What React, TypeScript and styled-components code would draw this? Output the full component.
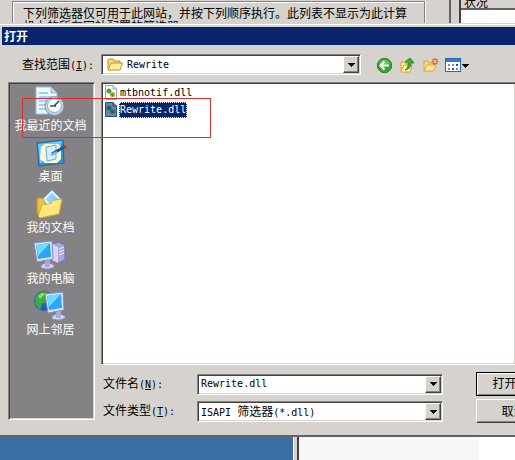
import React, { useState } from 'react';
import styled, { createGlobalStyle, css } from 'styled-components';

const face = '#d6d3ce';
const cjk = '"Noto Sans CJK SC", sans-serif';
const mono = '"DejaVu Sans Mono", "Noto Sans CJK SC", monospace';

const GlobalStyle = createGlobalStyle`
  * { box-sizing: border-box; }
  html, body, #root { height: 100%; }
  body { margin: 0; overflow: hidden; background: #3a6ea5; color: #000; font: 12px/14px ${cjk}; }
  button, input, select { font: inherit; color: inherit; border-radius: 0; margin: 0; }
`;

const sunken = css`
  border: 1px solid;
  border-color: #848284 #fff #fff #848284;
  box-shadow: inset 1px 1px 0 #424142, inset -1px -1px 0 ${face};
`;

const raised = css`
  border: 1px solid;
  border-color: #fff #424142 #424142 #fff;
  box-shadow: inset -1px -1px 0 #848284;
  background: ${face};
`;

const Screen = styled.div`
  display: grid;
  grid-template-rows: 23px auto 1fr;
  height: 100%;
  overflow: hidden;
`;

const Properties = styled.div`
  display: grid;
  grid-template-columns: minmax(0, 413px) 1fr;
  column-gap: 24px;
  padding-left: 12px;
  background: ${face};
  overflow: hidden;
`;

const GroupBox = styled.div`
  margin-top: 1px;
  padding: 4px 10px 0;
  border: 1px solid #848284;
  border-bottom: 0;
  box-shadow: inset 1px 1px 0 #fff, 1px 0 0 #fff;
  white-space: nowrap;
`;

const Note = styled.p`
  margin: 0;
  line-height: 13px;
`;

const StatusPane = styled.div`
  border-left: 2px solid #636163;
  padding-left: 8px;
`;

const StatusList = styled.div`
  height: 100%;
  border-left: 2px solid #424142;
  background: #fff;
`;

const StatusHeader = styled.div`
  height: 10px;
  padding-left: 3px;
  background: ${face};
  border-bottom: 2px solid #636163;
  line-height: 3px;
`;

const Dialog = styled.section`
  background: ${face};
  border-top: 1px solid ${face};
  border-bottom: 2px solid #636163;
  box-shadow: inset 0 1px 0 #fff;
  padding-bottom: 12px;
`;

const TitleBar = styled.h1`
  margin: 3px 0 0 2px;
  padding-left: 2px;
  height: 18px;
  background: #08246b;
  color: #fff;
  font-size: 12px;
  line-height: 17px;
  font-weight: 700;
`;

const LookBar = styled.div`
  display: grid;
  grid-template-columns: 79px 260px 1fr;
  align-items: center;
  padding: 9px 0 7px 22px;
`;

const Mono = styled.span`
  font-family: ${mono};
  font-size: 10px;
`;

const FieldLabel = styled.label`
  white-space: nowrap;
`;

const Combo = styled.div`
  ${sunken}
  display: grid;
  grid-template-columns: auto minmax(0, 1fr) 16px;
  align-items: center;
  height: 21px;
  padding: 1px;
  background: #fff;
`;

const FolderSlot = styled.span`
  display: flex;
  padding: 0 2px 0 4px;
`;

const comboText = css`
  width: 100%;
  height: 16px;
  border: 0;
  outline: 0;
  padding: 0 2px;
  background: transparent;
  appearance: none;
  font-family: ${mono};
  font-size: 10px;
  line-height: 16px;
`;

const ComboInput = styled.input`${comboText}`;
const ComboSelect = styled.select<{ $masked?: boolean }>`
  ${comboText}
  grid-area: 1 / 1;
  color: ${p => (p.$masked ? 'transparent' : '#000')};
`;

const Choice = styled.div`
  display: grid;
  grid-column: 2;
`;

const ChoiceText = styled.span`
  grid-area: 1 / 1;
  padding-left: 2px;
  line-height: 16px;
  pointer-events: none;
  white-space: nowrap;
`;

const DropButton = styled.button`
  ${raised}
  grid-column: 3;
  display: grid;
  place-items: center;
  width: 16px;
  height: 17px;
  padding: 0;
`;

const Tools = styled.div`
  display: flex;
  align-items: center;
  gap: 6px;
  padding: 2px 0 0 15px;
`;

const ToolButton = styled.button`
  display: flex;
  align-items: center;
  gap: 1px;
  padding: 0;
  border: 0;
  background: transparent;
`;

const Body = styled.div`
  display: grid;
  grid-template-columns: 87px minmax(0, 1fr);
  column-gap: 6px;
  padding-left: 8px;
`;

const Places = styled.nav`
  ${sunken}
  display: flex;
  flex-direction: column;
  align-items: center;
  gap: 3px;
  height: 338px;
  padding: 3px 2px 0 0;
  background: #848284;
`;

const Place = styled.button`
  display: flex;
  flex-direction: column;
  align-items: center;
  height: 48px;
  padding: 0;
  border: 0;
  background: transparent;
  color: #fff;
  line-height: 14px;
  white-space: nowrap;
`;

const Main = styled.div`
  display: flex;
  flex-direction: column;
`;

const Files = styled.ul`
  ${sunken}
  border-right: 0;
  height: 283px;
  margin: 0 0 7px;
  padding: 1px 2px;
  background: #fff;
  list-style: none;
`;

const FileButton = styled.button`
  display: flex;
  align-items: center;
  gap: 1px;
  height: 17px;
  padding: 0;
  border: 0;
  background: transparent;
`;

const FileName = styled.span<{ $selected: boolean }>`
  border: 1px ${p => (p.$selected ? 'dotted #ffffff' : 'solid transparent')};
  background: ${p => (p.$selected ? '#08246b' : 'transparent')};
  color: ${p => (p.$selected ? '#fff' : '#000')};
  font-family: ${mono};
  font-size: 10px;
  line-height: 14px;
`;

const Fields = styled.div`
  display: grid;
  grid-template-columns: 94px 246px 1fr;
  row-gap: 3px;
  align-items: center;
  padding-left: 2px;
`;

const ActionButton = styled.button<{ $primary?: boolean }>`
  ${raised}
  ${p => p.$primary && css`border-color: #000; box-shadow: inset 1px 1px 0 #fff, inset -1px -1px 0 #848284;`}
  width: 75px;
  height: 24px;
  margin-left: 33px;
  padding: 0;
  white-space: nowrap;
`;

const Desktop = styled.div`
  display: grid;
  grid-template-columns: 293px 6px 180px 1fr;
`;

const Frame = styled.div`
  background: ${face};
  border-left: 1px solid #fff;
  border-right: 2px solid #424142;
`;
const Pane = styled.div<{ $tone: string }>`background: ${p => p.$tone};`;

const RedMark = styled.div`
  position: absolute;
  left: 22px;
  top: 98px;
  width: 189px;
  height: 40px;
  border: 1px solid #d63031;
  pointer-events: none;
`;

const Arrow = () => (
  <svg width="7" height="4" viewBox="0 0 7 4" shapeRendering="crispEdges"><path d="M0 0H7L3.5 4Z" fill="#000" /></svg>
);

const FolderIcon = () => (
  <svg width="16" height="16" viewBox="0 0 16 16">
    <path d="M1 12V3L2 2H6L7.500 4H13V6" fill="#f7dc79" stroke="#b58c18" />
    <path d="M1 13L4 6H15.500L13 13Z" fill="#ffef9c" stroke="#bd9620" strokeLinejoin="round" />
  </svg>
);

const BackIcon = () => (
  <svg width="17" height="17" viewBox="0 0 17 17">
    <circle cx="8.500" cy="8.500" r="7.200" fill="#39a831" stroke="#218421" />
    <path d="M3 6Q8 0 14 6Q10 9 3 6" fill="#8cd67b" opacity=".6" />
    <path d="M13 8.500H5M8.500 4.500L4.500 8.500L8.500 12.500" fill="none" stroke="#fff" strokeWidth="2" />
  </svg>
);

const UpIcon = () => (
  <svg width="17" height="17" viewBox="0 0 17 17">
    <path d="M2 14V5H6L7 7H12V12L8 15Z" fill="#ffe794" stroke="#d6a631" />
    <path d="M2 15L5 8H13L11 15Z" fill="#fff3ad" stroke="#d6a631" />
    <path d="M6 13Q10 11 9 5H6L11 1L15 6H12Q12 12 6 13Z" fill="#42ad31" stroke="#217921" strokeWidth=".8" />
  </svg>
);

const NewFolderIcon = () => (
  <svg width="17" height="17" viewBox="0 0 17 17">
    <path d="M2 14V4H6L7 6H12V10" fill="#ffd973" stroke="#dea53a" />
    <path d="M2 14L5 8H14L11 14Z" fill="#ffeb9c" stroke="#dea53a" />
    <path d="M13 1V8M9.500 4.500H16.500M10.500 2L15.500 7M15.500 2L10.500 7" stroke="#e7592c" strokeWidth="1.200" />
    <circle cx="13" cy="4.500" r="1.200" fill="#ffe794" />
  </svg>
);

const ViewIcon = () => (
  <svg width="16" height="15" viewBox="0 0 16 15" shapeRendering="crispEdges">
    <rect x=".5" y=".5" width="15" height="13" fill="#fff" stroke="#2169b5" />
    <path d="M1 1H15V4H1Z" fill="#317dce" />
    <path d="M3 6H5V8H3ZM11 10H13V12H11Z" fill="#5aa6a5" />
    <path d="M7 6H9V8H7ZM3 10H5V12H3Z" fill="#7b8ea5" />
    <path d="M11 6H13V8H11ZM7 10H9V12H7Z" fill="#394d84" />
  </svg>
);

const DllIcon = ({ selected }: { selected: boolean }) => (
  <svg width="14" height="16" viewBox="0 0 14 16">
    <path d="M1.500 .5H9L12.500 4V14.500H1.500Z" fill={selected ? '#6b86b5' : '#fff'} stroke={selected ? '#294a7b' : '#8ca2bd'} />
    <path d="M9 .5V4H12.500" fill="none" stroke={selected ? '#294a7b' : '#8ca2bd'} />
    <circle cx="5" cy="6" r="2.500" fill={selected ? '#186b5a' : '#42a639'} />
    <circle cx="8.500" cy="9.500" r="2.800" fill={selected ? '#426b63' : '#c6b642'} />
    <path d="M7.500 9L9.500 11" stroke={selected ? '#215a63' : '#428e39'} strokeWidth="2" />
  </svg>
);

const RecentIcon = () => (
  <svg width="32" height="32" viewBox="0 0 32 32">
    <path d="M2 1H17L23 7V28H2Z" fill="#eff7ff" stroke="#94bee7" />
    <path d="M17 1V7H23" fill="#b5d7f7" stroke="#94bee7" />
    <path d="M5 7H14M5 11H17M5 15H14M5 19H12M5 23H13" stroke="#8cbef7" strokeWidth="1.500" />
    <circle cx="20.500" cy="20" r="9.500" fill="#c6d3de" stroke="#7b8ea5" />
    <circle cx="20.500" cy="19.500" r="7" fill="#f7ffff" stroke="#94aabd" />
    <path d="M25 15L20 20M16 20H22" stroke="#315273" strokeWidth="1.700" />
  </svg>
);

const DesktopIcon = () => (
  <svg width="32" height="32" viewBox="0 0 32 32">
    <path d="M2 6L28 3L29 26L4 29Z" fill="#2896de" stroke="#1865b5" />
    <path d="M3 7L27 4L26 8L5 27Z" fill="#6bcbf7" />
    <path d="M6 10L10 7H23L26 10V22L22 26H10L5 22Z" fill="#fff7ce" />
    <path d="M11 10L21 8V22L12 24Z" fill="#d6efff" stroke="#6ba6d6" />
    <path d="M17 17L29 10" stroke="#185994" strokeWidth="3" />
    <path d="M16 18L22 15" stroke="#63bef7" strokeWidth="2" />
    <circle cx="30" cy="10" r="1.500" fill="#b53120" />
  </svg>
);

const DocumentsIcon = () => (
  <svg width="32" height="32" viewBox="0 0 32 32">
    <path d="M3 10H10L13 7L25 9V24L9 29L3 25Z" fill="#efbe42" stroke="#c68e21" />
    <path d="M9 11L18 2L28 12L18 24Z" fill="#dff4ff" stroke="#7bbae7" />
    <path d="M12 11L18 5L25 12L18 19Z" fill="#8ecff5" />
    <path d="M4 28L8 17L17 16L20 12L28 11L25 26L6 30Z" fill="#ffe77b" stroke="#d6a631" />
    <path d="M8 18L17 17L20 13" fill="none" stroke="#fffacb" />
  </svg>
);

const Monitor = () => (
  <>
    <path d="M8 26Q15 21 22 27Q17 32 8 29Z" fill="#ced3ef" stroke="#8489b5" />
    <path d="M12 21H17V28H12Z" fill="#a5aad6" />
    <path d="M1 4L19 2L20 20L4 23Z" fill="#dee3f7" stroke="#848ec6" />
    <path d="M3 6L17 4L18 18L5 20Z" fill="#29a6f7" />
    <path d="M3 6L17 4L5 17Z" fill="#6ddcff" />
  </>
);

const ComputerIcon = () => (
  <svg width="34" height="32" viewBox="0 0 34 32">
    <path d="M19 5L26 3L32 6V21L25 24L19 21Z" fill="#aaa6d6" stroke="#7371ad" />
    <path d="M19 5L25 8V24L19 21Z" fill="#d6d3f7" />
    <path d="M26 10L31 8M26 13L31 11M26 16L31 14" stroke="#efefff" />
    <Monitor />
  </svg>
);

const NetworkIcon = () => (
  <svg width="34" height="32" viewBox="0 0 34 32">
    <circle cx="11" cy="11" r="10" fill="#1761be" />
    <path d="M5 4Q11 0 15 3L12 7L15 12L9 14L7 20Q0 14 2 8Z" fill="#39ad42" />
    <path d="M5 6Q9 1 12 4L7 9Z" fill="#8be15b" />
    <g transform="translate(11 0)"><Monitor /></g>
  </svg>
);

const places = [
  { name: '我最近的文档', Icon: RecentIcon },
  { name: '桌面', Icon: DesktopIcon },
  { name: '我的文档', Icon: DocumentsIcon },
  { name: '我的电脑', Icon: ComputerIcon },
  { name: '网上邻居', Icon: NetworkIcon },
];

const files = ['mtbnotif.dll', 'Rewrite.dll'];

export default function App() {
  const [file, setFile] = useState('Rewrite.dll');
  return (
    <>
      <GlobalStyle />
      <Screen>
        <Properties>
          <GroupBox>
            <Note>下列筛选器仅可用于此网站，并按下列顺序执行。此列表不显示为此计算</Note>
            <Note>机上的所有网站配置的筛选器。</Note>
          </GroupBox>
          <StatusPane>
            <StatusList><StatusHeader>状况</StatusHeader></StatusList>
          </StatusPane>
        </Properties>

        <Dialog aria-labelledby="title">
          <TitleBar id="title">打开</TitleBar>
          <LookBar>
            <FieldLabel htmlFor="look">查找范围<Mono>(<u>I</u>):</Mono></FieldLabel>
            <Combo>
              <FolderSlot><FolderIcon /></FolderSlot>
              <Choice><ComboSelect id="look"><option>Rewrite</option></ComboSelect></Choice>
              <DropButton aria-label="展开查找范围"><Arrow /></DropButton>
            </Combo>
            <Tools>
              <ToolButton aria-label="后退"><BackIcon /></ToolButton>
              <ToolButton aria-label="向上一级"><UpIcon /></ToolButton>
              <ToolButton aria-label="新建文件夹"><NewFolderIcon /></ToolButton>
              <ToolButton aria-label="查看"><ViewIcon /><Arrow /></ToolButton>
            </Tools>
          </LookBar>
          <Body>
            <Places>
              {places.map(({ name, Icon }) => (
                <Place key={name}><Icon />{name}</Place>
              ))}
            </Places>
            <Main>
              <Files>
                {files.map(name => (
                  <li key={name}>
                    <FileButton onClick={() => setFile(name)}>
                      <DllIcon selected={name === file} />
                      <FileName $selected={name === file}>{name}</FileName>
                    </FileButton>
                  </li>
                ))}
              </Files>
              <Fields>
                <FieldLabel htmlFor="file">文件名<Mono>(<u>N</u>):</Mono></FieldLabel>
                <Combo>
                  <Choice><ComboInput id="file" value={file} onChange={e => setFile(e.target.value)} /></Choice>
                  <DropButton aria-label="展开文件名"><Arrow /></DropButton>
                </Combo>
                <ActionButton $primary>打开<Mono>(<u>O</u>)</Mono></ActionButton>
                <FieldLabel htmlFor="type">文件类型<Mono>(<u>T</u>):</Mono></FieldLabel>
                <Combo>
                  <Choice>
                    <ComboSelect id="type" $masked><option>ISAPI 筛选器(*.dll)</option></ComboSelect>
                    <ChoiceText aria-hidden="true"><Mono>ISAPI </Mono>筛选器<Mono>(*.dll)</Mono></ChoiceText>
                  </Choice>
                  <DropButton aria-label="展开文件类型"><Arrow /></DropButton>
                </Combo>
                <ActionButton>取消</ActionButton>
              </Fields>
            </Main>
          </Body>
        </Dialog>

        <Desktop>
          <Pane $tone="#3a6ea5" /><Frame /><Pane $tone="#f7f7f7" /><Pane $tone="#fff" />
        </Desktop>
      </Screen>
      <RedMark />
    </>
  );
}
